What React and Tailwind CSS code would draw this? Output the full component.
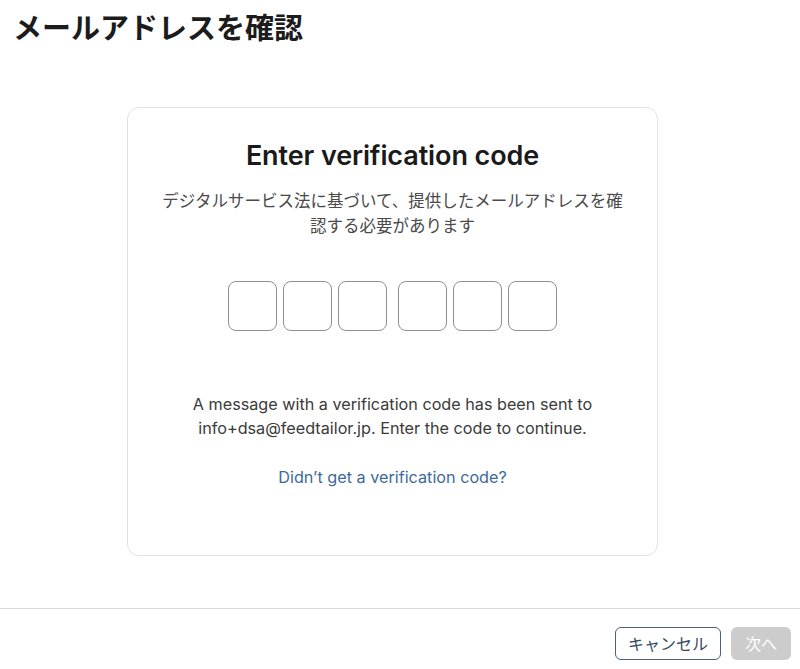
import React, { useState } from 'react';

export default function App() {
  const [code] = useState(['', '', '', '', '', '']);

  return (
    <div className="h-[669px] w-[800px] bg-white flex flex-col font-['Inter','Noto_Sans_CJK_JP',sans-serif]">
      {/* Header */}
      <h1 className="pl-[13px] pt-[12px] text-[29px] leading-[34px] font-bold text-[#1c1c1c]">
        メールアドレスを確認
      </h1>

      {/* Main */}
      <main className="flex-1">
        <div className="ml-[127px] mt-[61px] w-[531px] h-[449px] border border-[#e2e2e2] rounded-[12px] px-[30px] pt-[32px] flex flex-col items-center text-center">
          <h2 className="text-[27px] leading-[32px] font-semibold text-[#1a1a1a] tracking-[-0.1px]">
            Enter verification code
          </h2>
          <p className="mt-[17px] text-[16.5px] leading-[25px] text-[#4a4a4a]">
            デジタルサービス法に基づいて、提供したメールアドレスを確認する必要があります
          </p>

          <div className="mt-[42px] flex">
            <div className="flex gap-[6px]">
              {code.slice(0, 3).map((c, i) => (
                <div key={i} className="w-[49px] h-[50px] rounded-[8px] border-[1.5px] border-[#8f8f8f]">{c}</div>
              ))}
            </div>
            <div className="flex gap-[6px] ml-[11px]">
              {code.slice(3).map((c, i) => (
                <div key={i} className="w-[49px] h-[50px] rounded-[8px] border-[1.5px] border-[#8f8f8f]">{c}</div>
              ))}
            </div>
          </div>

          <p className="mt-[61px] text-[16.2px] leading-[24px] text-[#3a3a3a]">
            A message with a verification code has been sent to
            <br />
            info+dsa@feedtailor.jp. Enter the code to continue.
          </p>

          <a className="mt-[25px] text-[16.2px] leading-[24px] text-[#3d6a99] cursor-pointer">
            Didn’t get a verification code?
          </a>
        </div>
      </main>

      {/* Footer */}
      <footer className="h-[61px] border-t border-[#d9d9d9] flex justify-end items-start pt-[18px] pr-[9px] gap-[10px]">
        <button className="w-[106px] h-[33px] border border-[#4b6175] rounded-[6px] text-[16px] text-[#2f4a60] bg-white">
          キャンセル
        </button>
        <button className="w-[60px] h-[33px] rounded-[6px] text-[16px] text-white bg-[#cccccc]">
          次へ
        </button>
      </footer>
    </div>
  );
}
